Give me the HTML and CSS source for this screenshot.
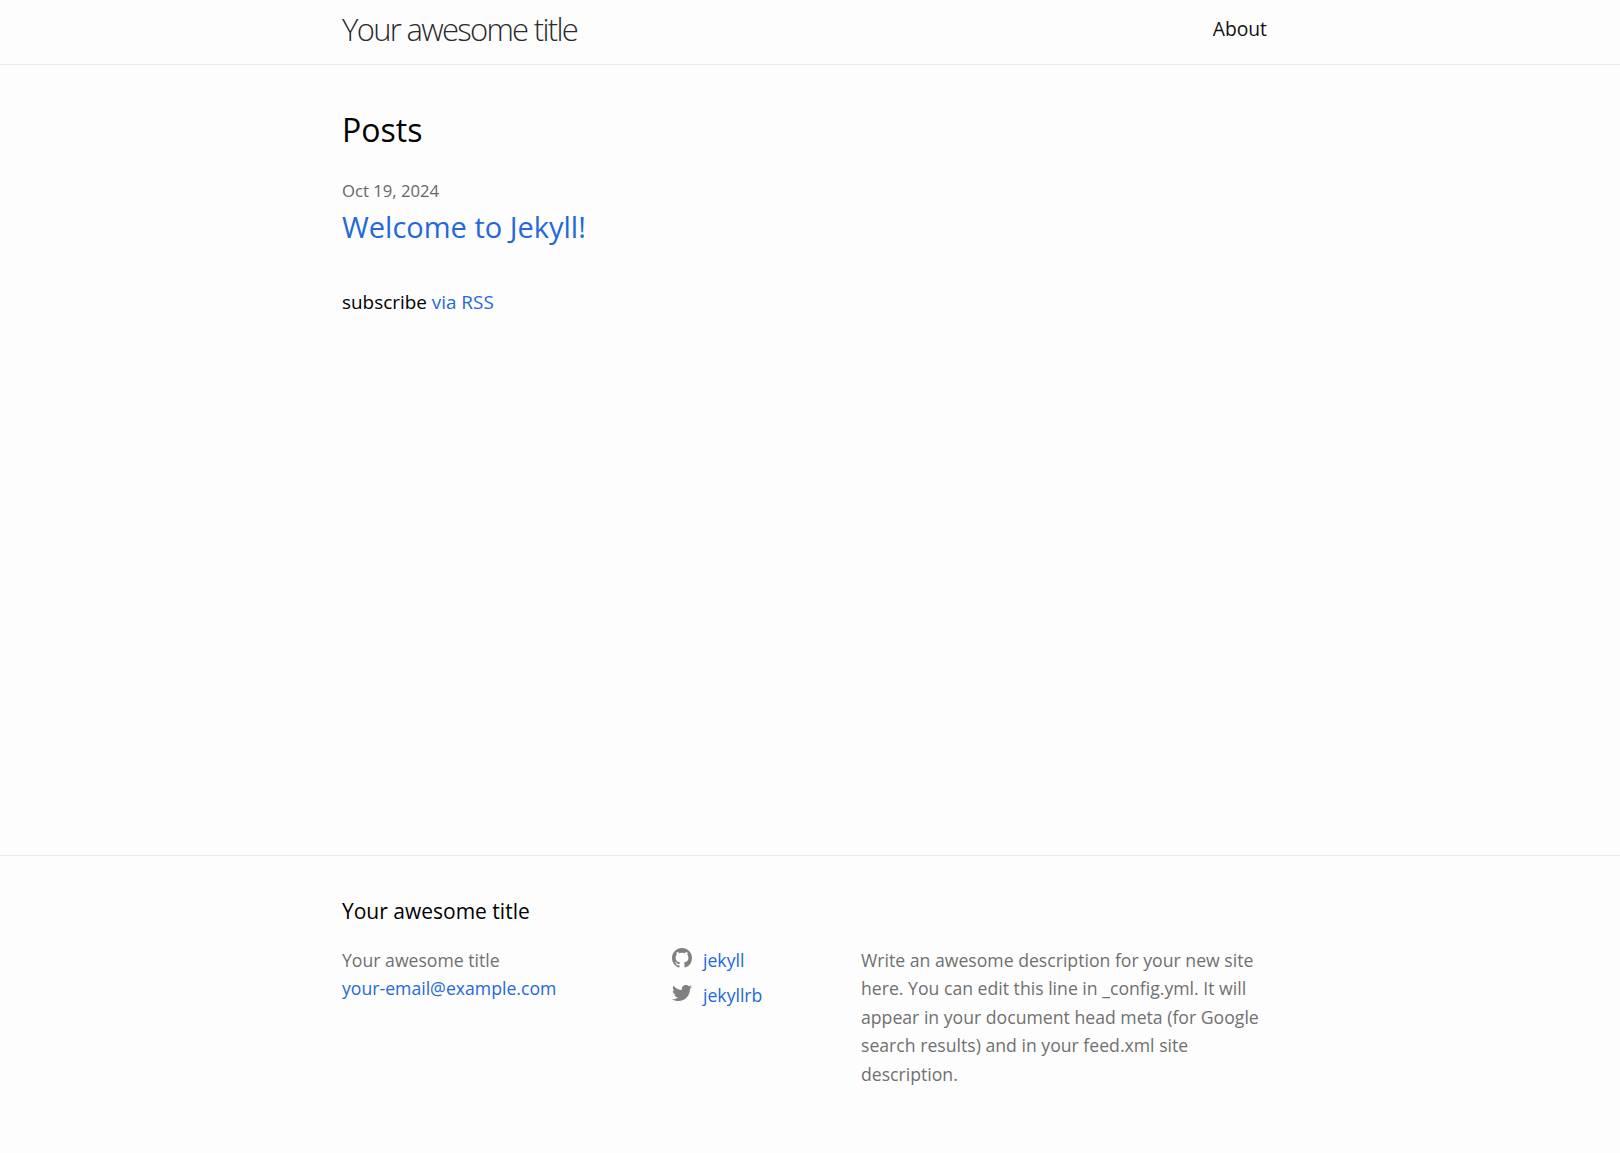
FILE: index.html
```html
<!DOCTYPE html>
<html lang="en">
<head>
<meta charset="utf-8">
<title>Your awesome title</title>
<link rel="stylesheet" href="styles.css">
</head>
<body>
<header class="site-header">
  <div class="wrapper header-row">
    <a class="site-title" href="#">Your awesome title</a>
    <nav class="site-nav"><a class="page-link" href="#">About</a></nav>
  </div>
</header>
<main class="page-content">
  <div class="wrapper">
    <h2 class="post-list-heading">Posts</h2>
    <ul class="post-list">
      <li>
        <span class="post-meta">Oct 19, 2024</span>
        <h3 class="post-title"><a href="#">Welcome to Jekyll!</a></h3>
      </li>
    </ul>
    <p class="rss-subscribe">subscribe <a href="#">via RSS</a></p>
  </div>
</main>
<footer class="site-footer">
  <div class="wrapper">
    <h2 class="footer-heading">Your awesome title</h2>
    <div class="footer-cols">
      <ul class="contact-list">
        <li>Your awesome title</li>
        <li><a href="#">your-email@example.com</a></li>
      </ul>
      <ul class="social-media-list">
        <li><a href="#"><svg class="svg-icon" viewBox="0 0 16 16"><path d="M8 0C3.58 0 0 3.58 0 8c0 3.54 2.29 6.53 5.47 7.59.4.07.55-.17.55-.38 0-.19-.01-.82-.01-1.49-2.01.37-2.53-.49-2.69-.94-.09-.23-.48-.94-.82-1.13-.28-.15-.68-.52-.01-.53.63-.01 1.08.58 1.23.82.72 1.21 1.87.87 2.33.66.07-.52.28-.87.51-1.07-1.78-.2-3.64-.89-3.64-3.95 0-.87.31-1.59.82-2.15-.08-.2-.36-1.02.08-2.12 0 0 .67-.21 2.2.82.64-.18 1.32-.27 2-.27.68 0 1.36.09 2 .27 1.53-1.04 2.2-.82 2.2-.82.44 1.1.16 1.92.08 2.12.51.56.82 1.27.82 2.15 0 3.07-1.87 3.75-3.65 3.95.29.25.54.73.54 1.48 0 1.07-.01 1.93-.01 2.2 0 .21.15.46.55.38A8.013 8.013 0 0 0 16 8c0-4.42-3.58-8-8-8z"/></svg><span class="username">jekyll</span></a></li>
        <li><a href="#"><svg class="svg-icon" viewBox="0 0 16 16"><path d="M15.969,3.058c-0.586,0.26-1.217,0.436-1.877,0.515c0.675-0.405,1.194-1.045,1.438-1.809c-0.632,0.375-1.332,0.647-2.076,0.793c-0.596-0.636-1.446-1.033-2.387-1.033c-1.806,0-3.27,1.464-3.27,3.27c0,0.256,0.029,0.506,0.085,0.745C5.163,5.404,2.753,4.102,1.14,2.124C0.859,2.607,0.698,3.168,0.698,3.767c0,1.134,0.577,2.135,1.455,2.722C1.616,6.472,1.112,6.325,0.671,6.08c0,0.014,0,0.027,0,0.041c0,1.584,1.127,2.906,2.623,3.206C3.02,9.402,2.731,9.442,2.433,9.442c-0.211,0-0.416-0.021-0.615-0.059c0.416,1.299,1.624,2.245,3.055,2.271c-1.119,0.877-2.529,1.4-4.061,1.4c-0.264,0-0.524-0.015-0.78-0.046c1.447,0.928,3.166,1.469,5.013,1.469c6.015,0,9.304-4.983,9.304-9.304c0-0.142-0.003-0.283-0.009-0.423C14.976,4.29,15.531,3.714,15.969,3.058z"/></svg><span class="username">jekyllrb</span></a></li>
      </ul>
      <p class="description">Write an awesome description for your new site here. You can edit this line in _config.yml. It will appear in your document head meta (for Google search results) and in your feed.xml site description.</p>
    </div>
  </div>
</footer>
</body>
</html>
```
FILE: styles.css
```css
* { box-sizing: border-box; }
html, body, h2, h3, p, ul { margin: 0; padding: 0; }
body {
  background: #fdfdfd;
  color: #111;
  font-family: "Open Sans", "Noto Sans", sans-serif;
  font-size: 18px;
  line-height: 1.5;
  min-height: 100vh;
  display: flex;
  flex-direction: column;
}
a { color: #2468dc; text-decoration: none; }
ul { list-style: none; }
.wrapper { width: 936px; margin: 0 auto; }
.site-header { height: 65px; border-bottom: 1px solid #e8e8e8; }
.header-row { display: flex; justify-content: space-between; align-items: center; height: 58px; }
.site-title { color: #2a2a2a; font-size: 31px; font-weight: 300; letter-spacing: -1.7px; }
.site-nav { padding-right: 11px; }
.page-link { color: #111; font-size: 19.3px; }
.page-content { flex: 1; padding-top: 40px; }
.post-list-heading { color: #000; font-size: 32px; font-weight: 400; line-height: 50px; margin-bottom: 23px; }
.post-meta { display: block; color: #666; font-size: 16.7px; line-height: 25px; }
.post-title { font-size: 29px; font-weight: 400; line-height: 48px; }
.rss-subscribe { margin-top: 37px; font-size: 18.9px; color: #000; }
.site-footer { border-top: 1px solid #e8e8e8; padding: 40px 0 65px; }
.footer-heading { color: #000; font-size: 21px; font-weight: 400; line-height: 30px; margin-bottom: 20px; }
.footer-cols { display: grid; grid-template-columns: 330px 189px 1fr; color: #707070; font-size: 17.65px; line-height: 28.4px; }
.social-media-list li { height: 35px; }
.svg-icon { width: 20px; height: 20px; fill: #808080; vertical-align: text-top; margin-right: 11px; }
.description { max-width: 410px; }
```
